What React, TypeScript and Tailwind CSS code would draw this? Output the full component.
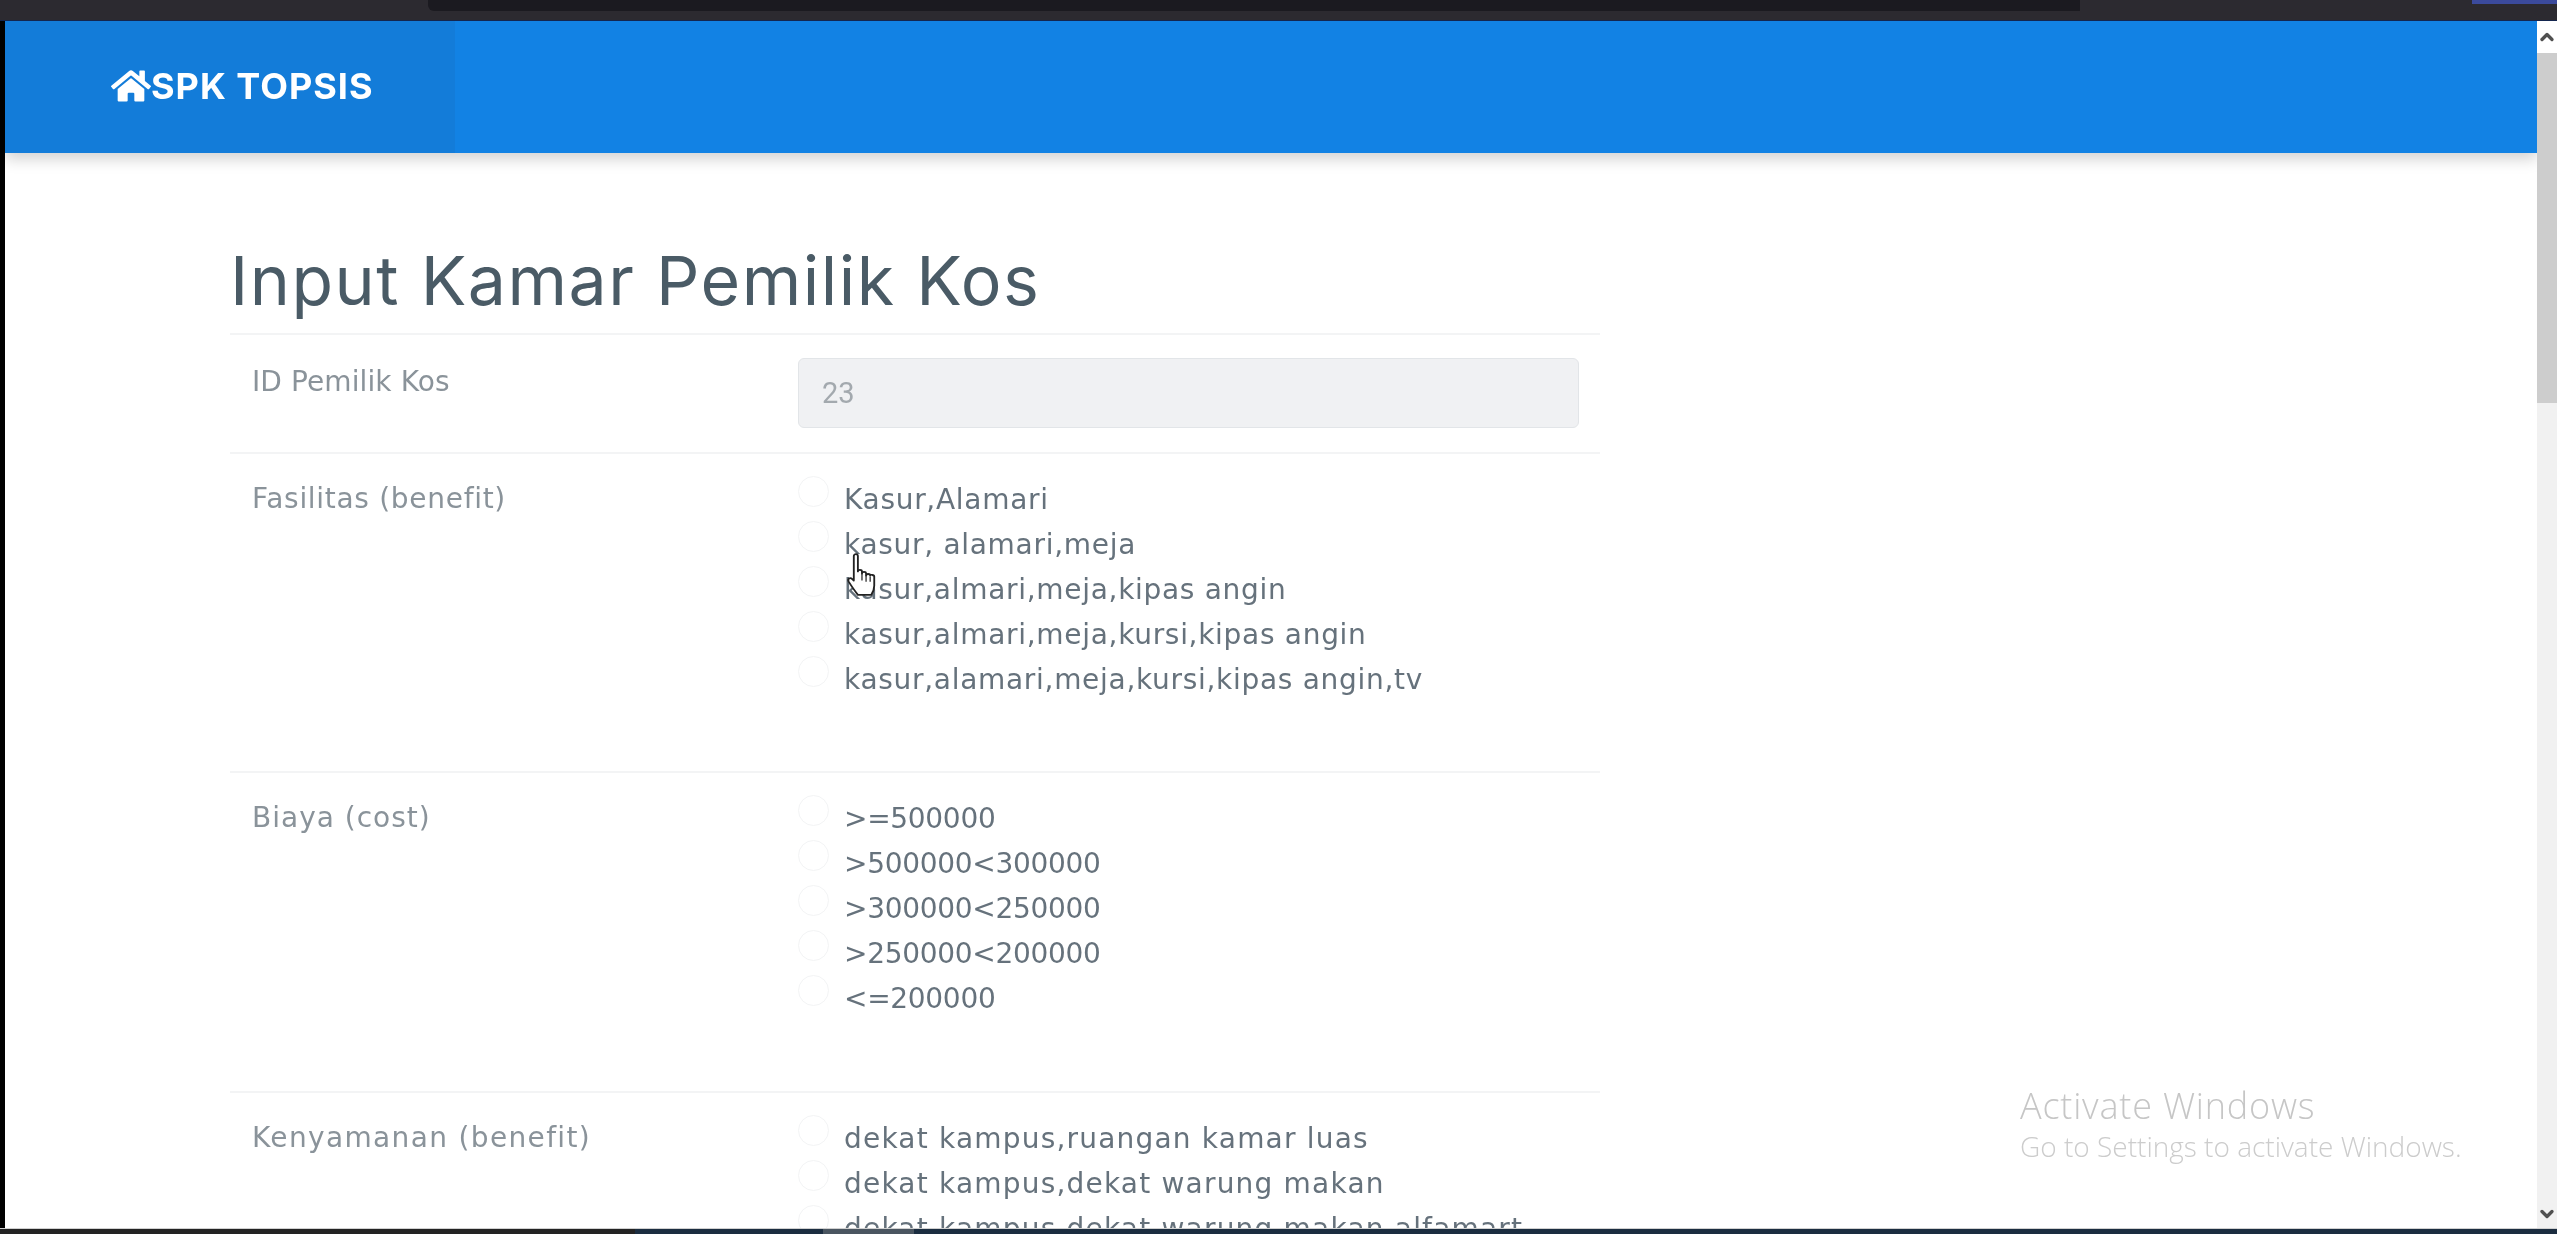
import React from "react";
import { FaHome } from "react-icons/fa";
import { ChevronUp, ChevronDown } from "lucide-react";

const fasilitas = [
  "Kasur,Alamari",
  "kasur, alamari,meja",
  "kasur,almari,meja,kipas angin",
  "kasur,almari,meja,kursi,kipas angin",
  "kasur,alamari,meja,kursi,kipas angin,tv",
];
const biaya = [">=500000", ">500000<300000", ">300000<250000", ">250000<200000", "<=200000"];
const kenyamanan = [
  "dekat kampus,ruangan kamar luas",
  "dekat kampus,dekat warung makan",
  "dekat kampus,dekat warung makan,alfamart",
];

function RadioList({ items, tracking }: { items: string[]; tracking: string }) {
  return (
    <div className="flex flex-col">
      {items.map((item) => (
        <label key={item} className="flex h-[45px] items-start">
          <span className="h-[31px] w-[31px] shrink-0 rounded-full border border-[#f3f4f5] bg-white" />
          <span className={`ml-[15px] mt-[3px] whitespace-nowrap text-[28px] leading-[42px] text-[#66727c] ${tracking}`}>
            {item}
          </span>
        </label>
      ))}
    </div>
  );
}

function Row(props: {
  label: string;
  items: string[];
  height: string;
  labelTracking: string;
  itemTracking: string;
}) {
  return (
    <div className={`flex border-t-2 border-[#f3f4f5] pt-[22px] ${props.height}`}>
      <div className={`w-[568px] pl-[22px] pt-[2px] text-[28px] leading-[42px] text-[#8a939a] ${props.labelTracking}`}>
        {props.label}
      </div>
      <RadioList items={props.items} tracking={props.itemTracking} />
    </div>
  );
}

export default function App() {
  return (
    <div className="relative flex h-[1234px] w-[2557px] flex-col overflow-hidden bg-black font-['DejaVu_Sans',sans-serif] blur-[0.5px]">
      {/* window strip on top */}
      <div className="relative h-[21px] shrink-0 border-b border-[#14264f] bg-[#2c2a30]">
        <div className="ml-[428px] h-[11px] w-[1652px] rounded-bl-md bg-[#1b1a20]" />
        <div className="absolute right-0 top-0 h-[4px] w-[85px] bg-[#3b4a9c]" />
      </div>

      <div className="flex min-h-0 flex-1">
        <div className="w-[5px] shrink-0 bg-black" />

        <div className="min-w-0 flex-1 overflow-hidden bg-white">
          <nav className="flex h-[132px] bg-[#1282e4] shadow-[0_6px_14px_rgba(0,0,0,0.18)]">
            <div className="flex w-[450px] items-center bg-[#137cd9] pb-[2px] pl-[106px] font-['Inter',sans-serif] text-white">
              <FaHome className="h-[36px] w-[40px]" />
              <span className="text-[36px] font-bold leading-none tracking-[1px]">SPK TOPSIS</span>
            </div>
          </nav>

          <div className="ml-[225px] w-[1370px]">
            <h1 className="h-[180px] pt-[88px] font-['Inter',sans-serif] text-[68px] font-normal leading-[78px] tracking-[1.5px] text-[#4a5b66]">
              Input Kamar Pemilik Kos
            </h1>

            <div className="flex h-[119px] border-t-2 border-[#f3f4f5] pt-[23px]">
              <div className="w-[568px] pl-[22px] pt-[3px] text-[28px] leading-[42px] tracking-[0.1px] text-[#8a939a]">
                ID Pemilik Kos
              </div>
              <input
                disabled
                value="23"
                className="h-[70px] w-[781px] rounded-md border border-[#e2e5e8] bg-[#f0f1f3] px-[23px] font-['Roboto',sans-serif] text-[29px] text-[#a3a9ae]"
              />
            </div>

            <Row
              label="Fasilitas (benefit)"
              items={fasilitas}
              height="h-[319px]"
              labelTracking="tracking-[0.7px]"
              itemTracking="tracking-[0.7px]"
            />
            <Row
              label="Biaya (cost)"
              items={biaya}
              height="h-[320px]"
              labelTracking="tracking-[1px]"
              itemTracking="tracking-[-0.3px]"
            />
            <Row
              label="Kenyamanan (benefit)"
              items={kenyamanan}
              height="h-[320px]"
              labelTracking="tracking-[1.35px]"
              itemTracking="tracking-[1.2px]"
            />
          </div>
        </div>

        {/* page scrollbar */}
        <div className="flex w-[20px] shrink-0 flex-col bg-[#f1f1f1]">
          <div className="flex h-[32px] items-center justify-center bg-white">
            <ChevronUp className="h-[20px] w-[20px] text-[#505050]" strokeWidth={4} />
          </div>
          <div className="h-[350px] bg-[#cdcdcd]" />
          <div className="flex flex-1 items-end justify-center pb-[4px]">
            <ChevronDown className="h-[20px] w-[20px] text-[#505050]" strokeWidth={4} />
          </div>
        </div>
      </div>

      {/* task bar edge */}
      <div className="flex h-[6px] shrink-0 border-t border-[#d0d0d0] bg-[#1b2d40]">
        <div className="w-[635px] bg-[#232323]" />
        <div className="ml-[188px] w-[91px] bg-[#4a5560]" />
      </div>

      {/* activation watermark */}
      <div className="absolute left-[2020px] top-[1084px] font-['Open_Sans',sans-serif] font-light">
        <div className="text-[36px] leading-[44px] tracking-[0.8px] text-[#c6c6c6]">Activate Windows</div>
        <div className="text-[28px] leading-[36px] text-[#cccccc]">Go to Settings to activate Windows.</div>
      </div>

      {/* mouse cursor */}
      <svg className="absolute left-[845px] top-[552px]" width="36" height="47" viewBox="0 0 32 46">
        <path
          d="M7 4c0-2.6 4-2.6 4 0v15c0-2 4-2 4 0v2c0-2 4-2 4 0v2c0-2 4-2 4 0 0-1 4-1 4 1v9c0 4-1 6-3 9H11c-3-4-6-8-9-13-1.500-3 1.500-4.500 3.500-2.500L7 28V4z"
          fill="#fff"
          stroke="#222"
          strokeWidth="1.8"
          strokeLinejoin="round"
        />
        <path d="M15 21v7M19 23v6M23 24v5" stroke="#222" strokeWidth="1.200" fill="none" />
      </svg>
    </div>
  );
}
